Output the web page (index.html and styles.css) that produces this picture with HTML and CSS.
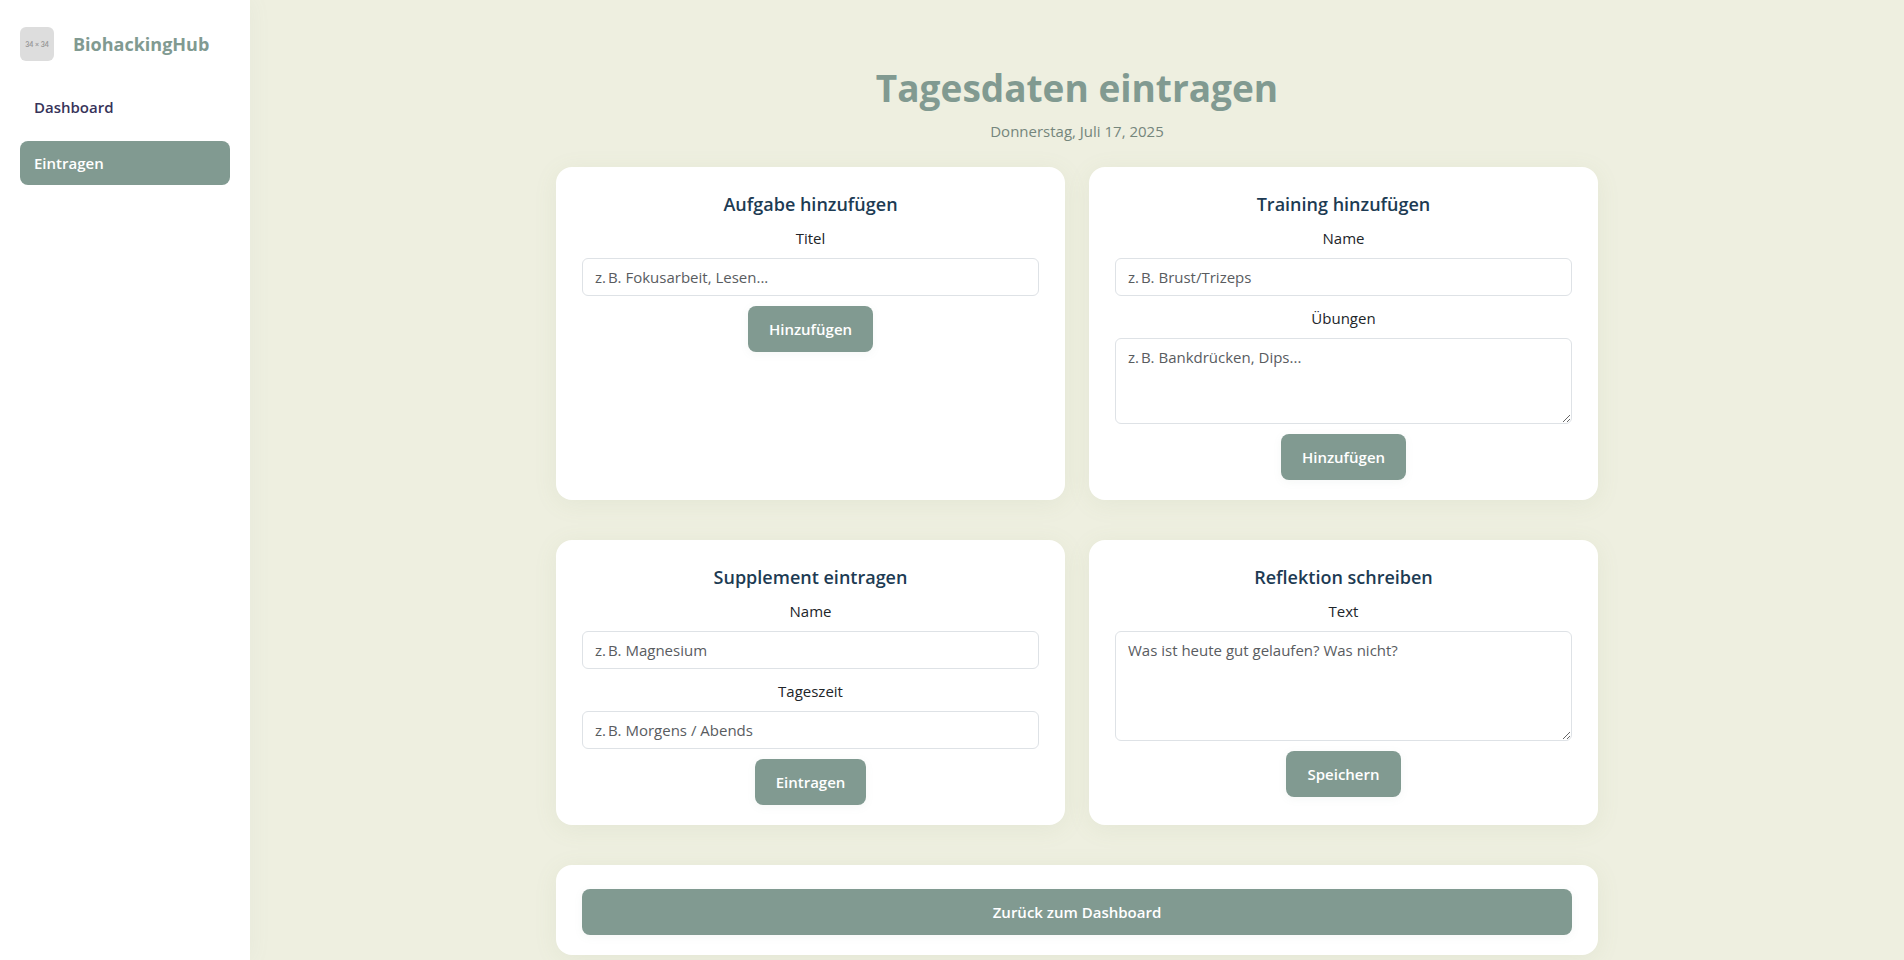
FILE: index.html
```html
<!DOCTYPE html>
<html lang="de">
<head>
<meta charset="utf-8">
<meta name="viewport" content="width=device-width, initial-scale=1">
<title>BiohackingHub – Tagesdaten eintragen</title>
<link rel="stylesheet" href="styles.css">
</head>
<body>
<div class="layout">
  <aside class="sidebar">
    <div class="brand">
      <svg class="brand-logo" viewBox="0 0 34 34" role="img" aria-label="Logo">
        <rect width="34" height="34" fill="#dddddd"/>
        <text class="brand-size" x="17" y="20" text-anchor="middle">34 × 34</text>
      </svg>
      <span class="brand-name">BiohackingHub</span>
    </div>
    <nav class="nav">
      <a class="nav-link" href="#dashboard">Dashboard</a>
      <a class="nav-link active" href="#eintragen" aria-current="page">Eintragen</a>
    </nav>
  </aside>
  <main class="main">
    <div class="content">
      <header class="page-head">
        <h1 class="page-title">Tagesdaten eintragen</h1>
        <p class="page-date">Donnerstag, Juli 17, 2025</p>
      </header>
      <div class="cards">
        <form class="card">
          <h2 class="card-title">Aufgabe hinzufügen</h2>
          <label class="label" for="task">Titel</label>
          <input class="field" id="task" type="text" placeholder="z.&#8239;B. Fokusarbeit, Lesen...">
          <button class="btn" type="button">Hinzufügen</button>
        </form>
        <form class="card">
          <h2 class="card-title">Training hinzufügen</h2>
          <label class="label" for="training">Name</label>
          <input class="field" id="training" type="text" placeholder="z.&#8239;B. Brust/Trizeps">
          <label class="label" for="exercises">Übungen</label>
          <textarea class="field" id="exercises" rows="3" placeholder="z.&#8239;B. Bankdrücken, Dips..."></textarea>
          <button class="btn" type="button">Hinzufügen</button>
        </form>
        <form class="card">
          <h2 class="card-title">Supplement eintragen</h2>
          <label class="label" for="supplement">Name</label>
          <input class="field" id="supplement" type="text" placeholder="z.&#8239;B. Magnesium">
          <label class="label" for="daytime">Tageszeit</label>
          <input class="field" id="daytime" type="text" placeholder="z.&#8239;B. Morgens / Abends">
          <button class="btn" type="button">Eintragen</button>
        </form>
        <form class="card">
          <h2 class="card-title">Reflektion schreiben</h2>
          <label class="label" for="reflection">Text</label>
          <textarea class="field" id="reflection" rows="4" placeholder="Was ist heute gut gelaufen? Was nicht?"></textarea>
          <button class="btn" type="button">Speichern</button>
        </form>
        <div class="card card-wide">
          <a class="btn btn-block" href="#dashboard">Zurück zum Dashboard</a>
        </div>
      </div>
    </div>
  </main>
</div>
</body>
</html>
```
FILE: styles.css
```css
* { box-sizing: border-box; }

body {
  margin: 0;
  background: #eeefe0;
  color: #212529;
  font-family: "Open Sans", "Noto Sans", sans-serif;
  font-size: 15px;
  line-height: 24px;
}

.layout {
  display: flex;
  min-height: 100vh;
}

.sidebar {
  flex: 0 0 250px;
  padding: 27px 20px;
  background: #fff;
  box-shadow: 2px 0 20px rgba(129, 154, 145, 0.06);
}

.brand {
  display: flex;
  align-items: center;
  gap: 19px;
  margin-bottom: 24px;
}

.brand-logo {
  width: 34px;
  height: 34px;
  border-radius: 6px;
}

.brand-size {
  fill: #999;
  font-family: Lato, sans-serif;
  font-size: 7px;
  font-weight: 700;
}

.brand-name {
  color: #819a91;
  font-size: 18px;
  font-weight: 700;
  line-height: 32px;
}

.nav {
  display: flex;
  flex-direction: column;
  gap: 12px;
}

.nav-link {
  padding: 10px 14px;
  border-radius: 8px;
  color: #37335a;
  font-weight: 600;
  text-decoration: none;
}

.nav-link.active {
  background: #819a91;
  color: #fff;
}

.main {
  flex: 1;
  min-width: 0;
  padding: 64px 24px 0;
}

.content {
  max-width: 1042px;
  margin: 0 auto;
}

.page-head {
  margin-bottom: 24px;
  text-align: center;
}

.page-title {
  margin: 0 0 7px;
  color: #819a91;
  font-size: 37px;
  font-weight: 700;
  line-height: 48px;
}

.page-date {
  margin: 0;
  color: #75867c;
}

.cards {
  display: grid;
  grid-template-columns: repeat(2, minmax(0, 1fr));
  gap: 40px 24px;
}

.card {
  padding: 24px 26px 20px;
  border-radius: 16px;
  background: #fff;
  box-shadow: 0 4px 24px rgba(129, 154, 100, 0.09);
  text-align: center;
}

.card-wide { grid-column: 1 / -1; }

.card-title {
  margin: 0 0 9px;
  color: #1d3b53;
  font-size: 18px;
  font-weight: 600;
  line-height: 26px;
}

.label {
  display: block;
  margin-bottom: 8px;
}

.field {
  display: block;
  width: 100%;
  margin: 0 0 10px;
  padding: 6px 12px;
  border: 1px solid #dee2e6;
  border-radius: 6px;
  background: #fff;
  color: #212529;
  font: inherit;
}

input.field { height: 38px; }

textarea.field { resize: vertical; }

.field::placeholder {
  color: #595c5f;
  opacity: 1;
}

.btn {
  display: inline-block;
  padding: 11px 21px;
  border: 0;
  border-radius: 8px;
  background: #819a91;
  box-shadow: 0 2px 8px rgba(129, 154, 145, 0.08);
  color: #fff;
  font: inherit;
  font-weight: 600;
  text-decoration: none;
  vertical-align: top;
}

.btn-block { display: block; }
```
